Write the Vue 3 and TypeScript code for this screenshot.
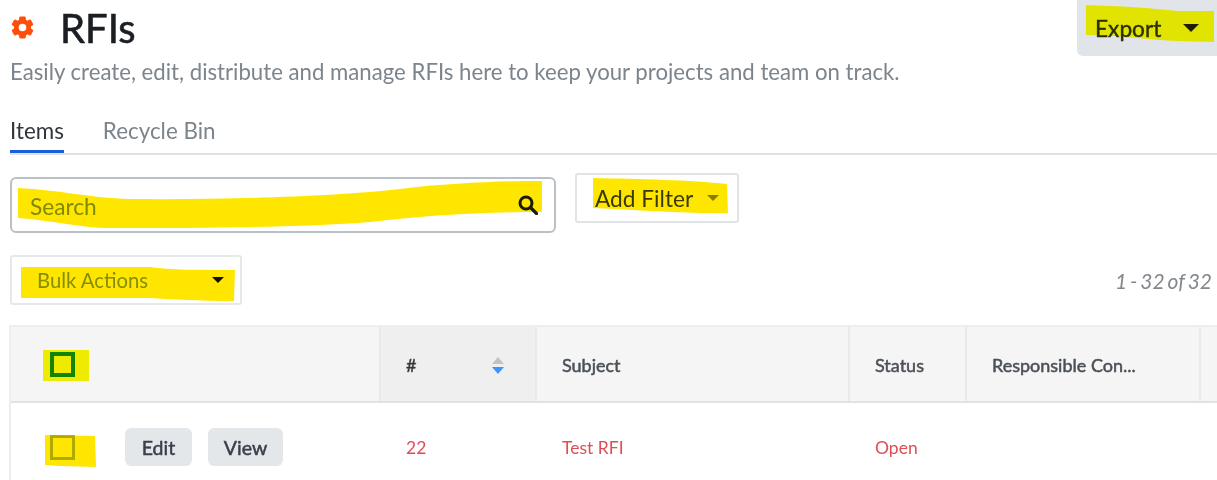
<template>
  <div class="page">
    <header class="head">
      <div class="title-row">
        <svg class="gear" viewBox="0 0 24 24" width="23" height="23" aria-hidden="true">
          <circle cx="12" cy="12" r="6.500" fill="none" stroke="#fb4f0b" stroke-width="5" />
          <rect
            v-for="angle in gearTeeth"
            :key="angle"
            x="8.500"
            y="0.500"
            width="7"
            height="6"
            rx="1.500"
            fill="#fb4f0b"
            :transform="`rotate(${angle} 12 12)`"
          />
        </svg>
        <h1>RFIs</h1>
      </div>
      <button class="export">Export <span class="caret big"></span></button>
    </header>
    <p class="sub">Easily create, edit, distribute and manage RFIs here to keep your projects and team on track.</p>

    <nav class="tabs">
      <a class="tab active">Items</a>
      <a class="tab">Recycle Bin</a>
    </nav>

    <div class="filters">
      <div class="search">
        <span>Search</span>
        <svg viewBox="0 0 20 20" width="20" height="20" aria-hidden="true">
          <circle cx="8" cy="8" r="6" fill="none" stroke="#1c1c1c" stroke-width="3" />
          <path d="M12.500 12.500 18.500 18.500" stroke="#1c1c1c" stroke-width="3.200" stroke-linecap="round" />
        </svg>
      </div>
      <button class="add-filter">Add Filter <span class="caret muted"></span></button>
    </div>

    <div class="bulk-row">
      <button class="bulk">Bulk Actions <span class="caret small"></span></button>
      <span class="count">1 - 32 of 32</span>
    </div>

    <div class="table">
      <div class="row header">
        <div class="cell c-check"><span class="box strong"></span></div>
        <div class="cell c-num sorted">
          <span>#</span>
          <span class="sort"><i class="up"></i><i class="down"></i></span>
        </div>
        <div class="cell c-subject">Subject</div>
        <div class="cell c-status">Status</div>
        <div class="cell c-resp">Responsible Con...</div>
        <div class="cell c-rest"></div>
      </div>
      <div class="row body">
        <div class="cell c-check">
          <span class="box"></span>
          <button class="mini first">Edit</button>
          <button class="mini">View</button>
        </div>
        <div class="cell c-num">22</div>
        <div class="cell c-subject">Test RFI</div>
        <div class="cell c-status">Open</div>
        <div class="cell c-resp"></div>
        <div class="cell c-rest"></div>
      </div>
    </div>

    <!-- hand drawn marker strokes sitting over the screenshot -->
    <svg class="marker" viewBox="0 0 1217 480" width="1217" height="480" aria-hidden="true">
      <path fill="#ffe600" d="M18 188 C60 190 90 198 130 199 C230 200 340 196 400 189 C450 183 500 181 542 181 L542 212 C480 212 420 216 370 222 C300 228 180 228 110 228 C80 228 50 220 18 218 Z" />
      <path fill="#ffe600" d="M593 178 C640 179 690 180 727 184 L728 213 C690 214 640 210 593 208 Z" />
      <path fill="#ffe600" d="M21 267 L150 267 C170 270 200 270 235 270 L234 301 C200 301 170 299 150 298 L21 298 Z" />
      <path fill="#ffff00" d="M1086 5 C1120 6 1150 8 1178 11 L1214 11 L1214 42 L1178 41 C1150 40 1120 35 1086 35 Z" />
      <path fill="#f8f400" d="M43 350 L89 350 L89 381 L43 381 Z" />
      <path fill="#ffe600" d="M45 435 L95 436 L96 467 L60 466 L45 465 Z" />
    </svg>
  </div>
</template>

<script setup lang="ts">
const gearTeeth = [0, 60, 120, 180, 240, 300]
</script>

<style>
html,
body {
  margin: 0;
  background: #fff;
}
</style>

<style scoped>
.page {
  position: relative;
  width: 1217px;
  height: 480px;
  overflow: hidden;
  padding-left: 10px;
  box-sizing: border-box;
  background: #fff;
  font-family: Lato, "Liberation Sans", sans-serif;
  color: #2f3437;
  /* the reference is an upscaled capture, everything is a little soft */
  filter: blur(0.4px);
}
button {
  font-family: inherit;
  cursor: pointer;
}
.head {
  display: flex;
  justify-content: space-between;
  align-items: flex-start;
  height: 56px;
}
.title-row {
  display: flex;
  align-items: center;
  gap: 26px;
  height: 56px;
}
.gear {
  display: block;
  margin-top: -2px;
  margin-left: 1px;
}
h1 {
  margin: 0;
  font-size: 40px;
  font-weight: 400;
  -webkit-text-stroke: 0.6px #1b1f24;
  color: #1b1f24;
  line-height: 56px;
}
.export {
  display: flex;
  align-items: center;
  justify-content: space-between;
  width: 140px;
  height: 56px;
  padding: 0 18px 0 18px;
  border: 0;
  border-radius: 0 0 0 6px;
  background: #e1e4e8;
  font-size: 22.700px;
  -webkit-text-stroke: 0.4px #2b2f10;
  color: #2b2f10;
}
.caret {
  display: inline-block;
  width: 0;
  height: 0;
  border-left: 8px solid transparent;
  border-right: 8px solid transparent;
  border-top: 8px solid #1f1f1f;
}
.caret.big {
  margin-left: 20px;
}
.caret.muted {
  border-left-width: 6px;
  border-right-width: 6px;
  border-top: 6px solid #8a8a5a;
}
.caret.small {
  border-left-width: 6px;
  border-right-width: 6px;
  border-top: 6px solid #111;
}
.sub {
  margin: 4px 0 0;
  font-size: 22.200px;
  line-height: 24px;
  color: #7c848c;
}
.tabs {
  display: flex;
  gap: 39px;
  margin-top: 34px;
  border-bottom: 2px solid #dfe1e4;
  height: 35px;
}
.tab {
  font-size: 22.400px;
  line-height: 26px;
  color: #7c848c;
  height: 35px;
  box-sizing: border-box;
}
.tab.active {
  color: #32363b;
  border-bottom: 3px solid #1a5fd8;
}
.filters {
  display: flex;
  align-items: flex-start;
  gap: 19px;
  margin-top: 18px;
}
.search {
  display: flex;
  align-items: center;
  justify-content: space-between;
  box-sizing: border-box;
  width: 546px;
  height: 56px;
  margin-top: 4px;
  padding: 0 16px 0 18px;
  border: 2px solid #b9c0c6;
  border-radius: 6px;
  font-size: 22.700px;
  color: #80996e;
}
.search span {
  margin-top: 2px;
}
.add-filter {
  display: flex;
  align-items: center;
  gap: 14px;
  box-sizing: border-box;
  width: 164px;
  height: 50px;
  padding: 0 18px;
  background: #fff;
  border: 2px solid #e1e4e7;
  border-radius: 3px;
  font-size: 22.700px;
  color: #3a3f44;
  white-space: nowrap;
}
.bulk-row {
  display: flex;
  align-items: center;
  justify-content: space-between;
  margin-top: 22px;
  padding-right: 5px;
}
.bulk {
  display: flex;
  align-items: center;
  justify-content: space-between;
  box-sizing: border-box;
  width: 232px;
  height: 50px;
  padding: 0 16px 0 25px;
  background: #fff;
  border: 2px solid #e6e8ea;
  border-radius: 3px;
  font-size: 20.300px;
  color: #859c70;
}
.count {
  font-size: 21px;
  font-style: italic;
  word-spacing: -2px;
  color: #83888d;
}
.table {
  margin-top: 20px;
  margin-left: -1px;
  width: 1230px;
  border-left: 2px solid #eeeeee;
  border-top: 2px solid #eeeeee;
}
.row {
  display: grid;
  grid-template-columns: 370px 156px 313px 117px 234px 1fr;
}
.header {
  height: 74px;
  background: #f5f5f5;
  border-bottom: 2px solid #e2e2e2;
  font-size: 18px;
  -webkit-text-stroke: 0.5px #4b5056;
  color: #4b5056;
}
.body {
  height: 88px;
  font-size: 17.500px;
  color: #df4d55;
}
.cell {
  display: flex;
  align-items: center;
  box-sizing: border-box;
  padding-left: 25px;
  min-width: 0;
}
.header .cell {
  border-right: 2px solid #e9e9e9;
}
.header .c-num,
.header .c-subject,
.header .c-status,
.header .c-resp {
  padding-top: 2px;
}
.c-check {
  padding-left: 39px;
}
.sorted {
  justify-content: space-between;
  padding-right: 31px;
  background: #efefef;
  color: #2f3135;
}
.box {
  display: block;
  box-sizing: border-box;
  flex: none;
  width: 25px;
  height: 25px;
  border: 3px solid #b0bc60;
}
.box.strong {
  border: 4px solid #138a0c;
}
.sort {
  display: flex;
  flex-direction: column;
  gap: 3px;
}
.sort i {
  display: block;
  width: 0;
  height: 0;
  border-left: 6px solid transparent;
  border-right: 6px solid transparent;
}
.sort .up {
  border-bottom: 7px solid #c3c3c3;
}
.sort .down {
  border-top: 7px solid #3a96ff;
}
.mini {
  box-sizing: border-box;
  flex: none;
  width: 67px;
  height: 38px;
  padding: 0;
  border: 0;
  border-radius: 6px;
  background: #e4e7ea;
  font-size: 19.500px;
  -webkit-text-stroke: 0.5px #3a3f4a;
  color: #3a3f4a;
  margin-left: 16px;
}
.mini:last-child {
  width: 75px;
}
.mini.first {
  margin-left: 50px;
}
.marker {
  position: absolute;
  left: 0;
  top: 0;
  pointer-events: none;
  mix-blend-mode: multiply;
}
</style>
